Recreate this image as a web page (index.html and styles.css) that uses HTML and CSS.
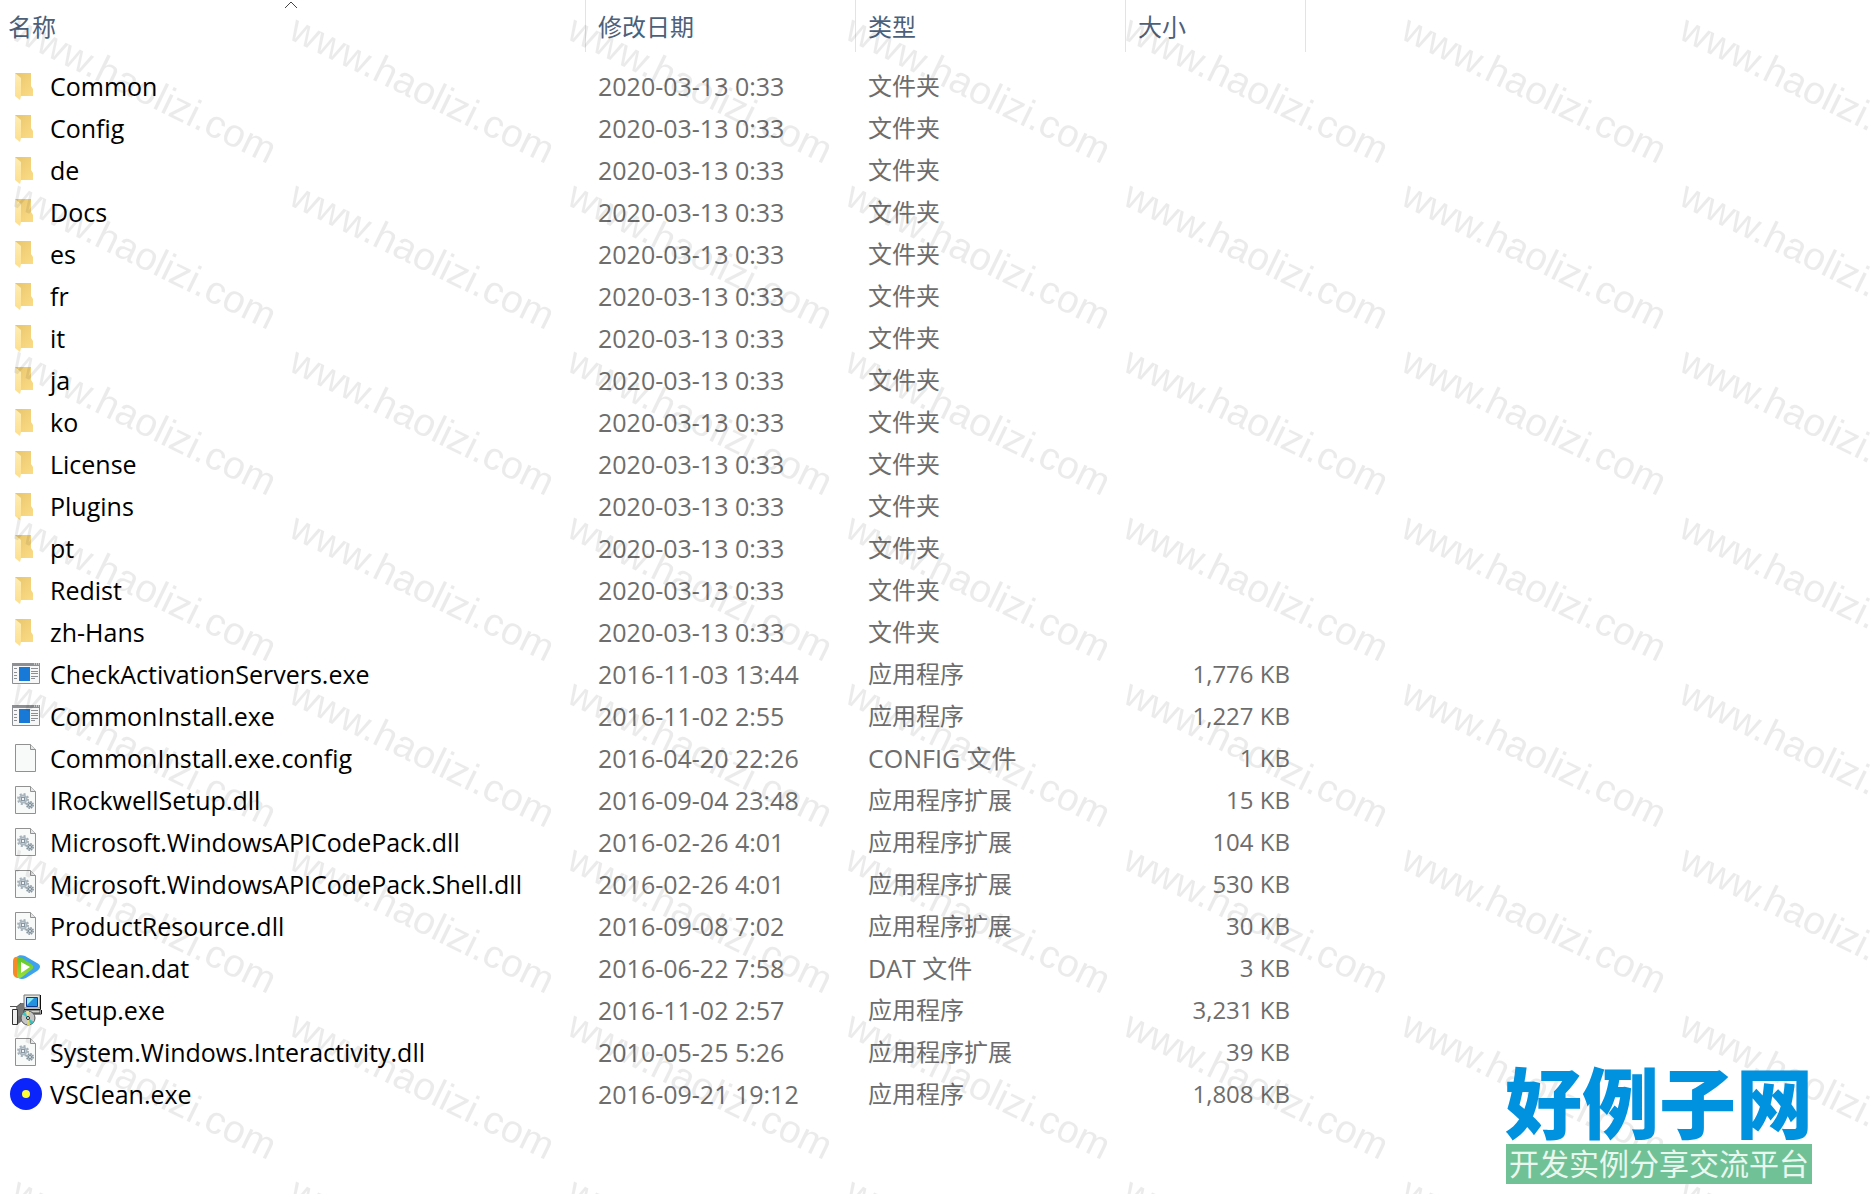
FILE: index.html
```
<!DOCTYPE html>
<html lang="zh-CN">
<head>
<meta charset="utf-8">
<title>文件列表</title>
<link rel="stylesheet" href="styles.css">
</head>
<body>
<svg class="defs" aria-hidden="true">
  <defs>
    <linearGradient id="fold" x1="0" y1="0" x2="1" y2="1"><stop offset="0" stop-color="#e8c56c"/><stop offset="1" stop-color="#fbdc86"/></linearGradient>
    <linearGradient id="flap" x1="0" y1="0" x2="0" y2="1"><stop offset="0" stop-color="#ffedb5"/><stop offset="1" stop-color="#fddf8c"/></linearGradient>
    <linearGradient id="green" x1="0" y1="0" x2="0" y2="1"><stop offset="0" stop-color="#5cc62a"/><stop offset="1" stop-color="#9be03a"/></linearGradient>
    <symbol id="i-folder" viewBox="0 0 32 32">
      <path d="M5 3h16v13l2 3v7H5z" fill="url(#fold)"/>
      <path d="M5 3l6 5v18l-1 4-5-4z" fill="url(#flap)"/>
    </symbol>
    <symbol id="i-app" viewBox="0 0 32 32">
      <path d="M2.500 5.500h27v20h-27z" fill="#f7f7f7" stroke="#8c8f93"/>
      <path d="M2 5h28v3H2z" fill="#8c8f93"/>
      <path d="M24 6h1m1 0h1m1 0h1" stroke="#fff"/>
      <path d="M9 9h11v14H9z" fill="#1979d7"/>
      <path d="M4 10.500h3M4 14.500h3M4 17.500h3M4 20.500h3M21 10.500h7M21 13.500h7M21 15.500h7M21 18.500h7M21 20.500h4" stroke="#8c8f93"/>
    </symbol>
    <symbol id="i-file" viewBox="0 0 32 32">
      <path d="M5.500 2.500h15l5 5v22h-20z" fill="#f8f9f9" stroke="#919191"/>
      <path d="M20.500 2.500v5h5" fill="#e4e6e8" stroke="#919191"/>
    </symbol>
    <symbol id="i-dll" viewBox="0 0 32 32">
      <use href="#i-file"/>
      <circle cx="13" cy="15" r="5" fill="none" stroke="#a3b0b8" stroke-width="2" stroke-dasharray="2 1.927"/>
      <circle cx="13" cy="15" r="3.500" fill="#f1f4f6" stroke="#a9b6be" stroke-width="2"/>
      <rect x="11.500" y="13.500" width="3" height="3" fill="none" stroke="#8796a0"/>
      <circle cx="20" cy="21" r="3.200" fill="#b8c4cb" stroke="#8795a0" stroke-width="1.500" stroke-dasharray="1.500 1"/>
      <circle cx="20" cy="21" r="1.500" fill="#e9eef1" stroke="#768690"/>
    </symbol>
    <symbol id="i-play" viewBox="0 0 32 32">
      <path d="M7 5c1-2 5-2 8-1l12 7c4 2 4 5 0 8l-11 7c-4 2-8 1-9-2z" fill="#3fa2ef"/>
      <path d="M3 9c0-4 3-5 6-4v21c-4 0-6-2-6-6z" fill="#f78b24"/>
      <path d="M7 8c0-3 3-3 5-2l9 6c3 2 3 4 0 6l-9 7c-3 2-5 1-5-2z" fill="url(#green)"/>
      <path d="M11 10l9 5-9 6z" fill="#fff"/>
    </symbol>
    <symbol id="i-setup" viewBox="0 0 32 32">
      <path d="M6 13l5-4h4v16l-7 5z" fill="#777"/>
      <path d="M2.500 15.500h5v15h-5z" fill="#f0f0f0" stroke="#333"/>
      <path d="M0 12.500h7l4-3.500" fill="none" stroke="#555"/>
      <path d="M14 1h16v13H14z" fill="#e7e7df" stroke="#777"/>
      <path d="M14 16h16v3H14z" fill="#d2d2ca" stroke="#444"/>
      <path d="M30.500 1v14.500H14M31.500 16v4H20" fill="none" stroke="#111"/>
      <path d="M16.500 3.500h11v9h-11z" fill="#2490e0" stroke="#103a90"/>
      <path d="M17 4h7l-7 7z" fill="#8ceaf5"/>
      <circle cx="18" cy="24" r="7" fill="#c5c5c5" stroke="#555"/>
      <path d="M18 24l-6-4 3-2zM18 24l6 4-3 2z" fill="#35c9c5"/>
      <path d="M18 24l-2-7h3zM18 24l-1 7h3z" fill="#efe66b"/>
      <circle cx="18" cy="24" r="1.500" fill="#fff" stroke="#222"/>
    </symbol>
    <symbol id="i-disc" viewBox="0 0 32 32">
      <circle cx="16" cy="16" r="16" fill="#0b24fb"/><circle cx="16" cy="16" r="4" fill="#fffd38"/>
    </symbol>
    <pattern id="mark" x="276" y="8" width="278" height="166" patternUnits="userSpaceOnUse">
      <text class="mark-text" transform="translate(11 30) rotate(26)">www.haolizi.com</text>
    </pattern>
  </defs>
</svg>
<main class="explorer">
  <table class="files">
    <colgroup><col class="c-name"><col class="c-date"><col class="c-type"><col class="c-size"><col></colgroup>
    <thead>
      <tr>
        <th scope="col" aria-sort="ascending"><button type="button">名称</button>
          <svg class="caret" width="14" height="8" viewBox="0 0 14 8" aria-hidden="true"><path d="M1 7l6-6 6 6" fill="none" stroke="#444"/></svg></th>
        <th scope="col"><button type="button">修改日期</button></th>
        <th scope="col"><button type="button">类型</button></th>
        <th scope="col"><button type="button">大小</button></th>
        <td></td>
      </tr>
    </thead>
    <tbody id="rows"></tbody>
  </table>
  <svg class="watermark" aria-hidden="true"><rect width="100%" height="100%" fill="url(#mark)"/></svg>
  <aside class="brand">
    <strong class="brand-name">好例子网</strong>
    <span class="brand-line">开发实例分享交流平台</span>
  </aside>
</main>
<script src="files.js"></script>
</body>
</html>
```
FILE: styles.css
```
body {
  margin: 0;
  background: #fff;
  font-family: "Open Sans", "Noto Sans CJK SC", sans-serif;
  font-size: 24px;
  line-height: 32px;
  color: #6d6d6d;
}

.defs {
  position: absolute;
  width: 0;
  height: 0;
}

.explorer {
  position: relative;
  min-height: 100vh;
  overflow: hidden;
}

.files {
  width: 100%;
  table-layout: fixed;
  border-collapse: separate;
  border-spacing: 0;
}

.c-name { width: 586px; }
.c-date { width: 270px; }
.c-type { width: 270px; }
.c-size { width: 180px; }

.files th,
.files td {
  padding: 0 12px;
  text-align: left;
  font-weight: 400;
  white-space: nowrap;
}

.files thead th {
  position: relative;
  height: 50px;
  padding-top: 2px;
  border-right: 1px solid #e3e3e3;
}

.files thead::after {
  content: "";
  display: block;
  height: 13px;
}

.files th:first-child {
  padding-left: 8px;
}

.files td:first-child {
  padding-left: 10px;
}

.files button {
  padding: 0;
  border: 0;
  background: none;
  font: inherit;
  color: #4c607a;
}

.caret {
  position: absolute;
  top: 1px;
  left: calc(50% - 9px);
}

.files tbody td {
  height: 42px;
}

.entry {
  display: flex;
  align-items: center;
  gap: 8px;
  color: #000;
}

.entry,
.date,
.latin {
  font-size: 25px;
}

.entry svg {
  flex: none;
  width: 32px;
  height: 32px;
}

.files .size {
  padding-right: 16px;
  text-align: right;
}

.watermark {
  position: absolute;
  inset: 0;
  width: 100%;
  height: 100%;
  pointer-events: none;
}

.mark-text {
  font: 39px "Liberation Sans", Arial, sans-serif;
  fill: #000;
  fill-opacity: 0.08;
}

.brand {
  position: absolute;
  right: 61px;
  bottom: 10px;
  display: flex;
  flex-direction: column;
  align-items: center;
}

.brand-name {
  font-size: 77px;
  line-height: 80px;
  font-weight: 900;
  color: #0091df;
}

.brand-line {
  padding: 0 3px;
  background: #70c296;
  font-size: 30px;
  line-height: 40px;
  color: #e9f7ef;
}
```
FILE: files.js
```
const FOLDERS = ["Common", "Config", "de", "Docs", "es", "fr", "it", "ja", "ko", "License", "Plugins", "pt", "Redist", "zh-Hans"];

const FILES = [
  ["app", "CheckActivationServers.exe", "2016-11-03 13:44", "应用程序", "1,776 KB"],
  ["app", "CommonInstall.exe", "2016-11-02 2:55", "应用程序", "1,227 KB"],
  ["file", "CommonInstall.exe.config", "2016-04-20 22:26", "CONFIG 文件", "1 KB"],
  ["dll", "IRockwellSetup.dll", "2016-09-04 23:48", "应用程序扩展", "15 KB"],
  ["dll", "Microsoft.WindowsAPICodePack.dll", "2016-02-26 4:01", "应用程序扩展", "104 KB"],
  ["dll", "Microsoft.WindowsAPICodePack.Shell.dll", "2016-02-26 4:01", "应用程序扩展", "530 KB"],
  ["dll", "ProductResource.dll", "2016-09-08 7:02", "应用程序扩展", "30 KB"],
  ["play", "RSClean.dat", "2016-06-22 7:58", "DAT 文件", "3 KB"],
  ["setup", "Setup.exe", "2016-11-02 2:57", "应用程序", "3,231 KB"],
  ["dll", "System.Windows.Interactivity.dll", "2010-05-25 5:26", "应用程序扩展", "39 KB"],
  ["disc", "VSClean.exe", "2016-09-21 19:12", "应用程序", "1,808 KB"]
];

const entries = FOLDERS.map(name => ["folder", name, "2020-03-13 0:33", "文件夹", ""]).concat(FILES);

document.getElementById("rows").innerHTML = entries.map(([icon, name, date, type, size]) => `
  <tr>
    <td><div class="entry"><svg aria-hidden="true"><use href="#i-${icon}"/></svg><span>${name}</span></div></td>
    <td class="date">${date}</td>
    <td${/^[A-Z]/.test(type) ? ' class="latin"' : ""}>${type}</td>
    <td class="size">${size}</td>
    <td></td>
  </tr>`).join("");
```
